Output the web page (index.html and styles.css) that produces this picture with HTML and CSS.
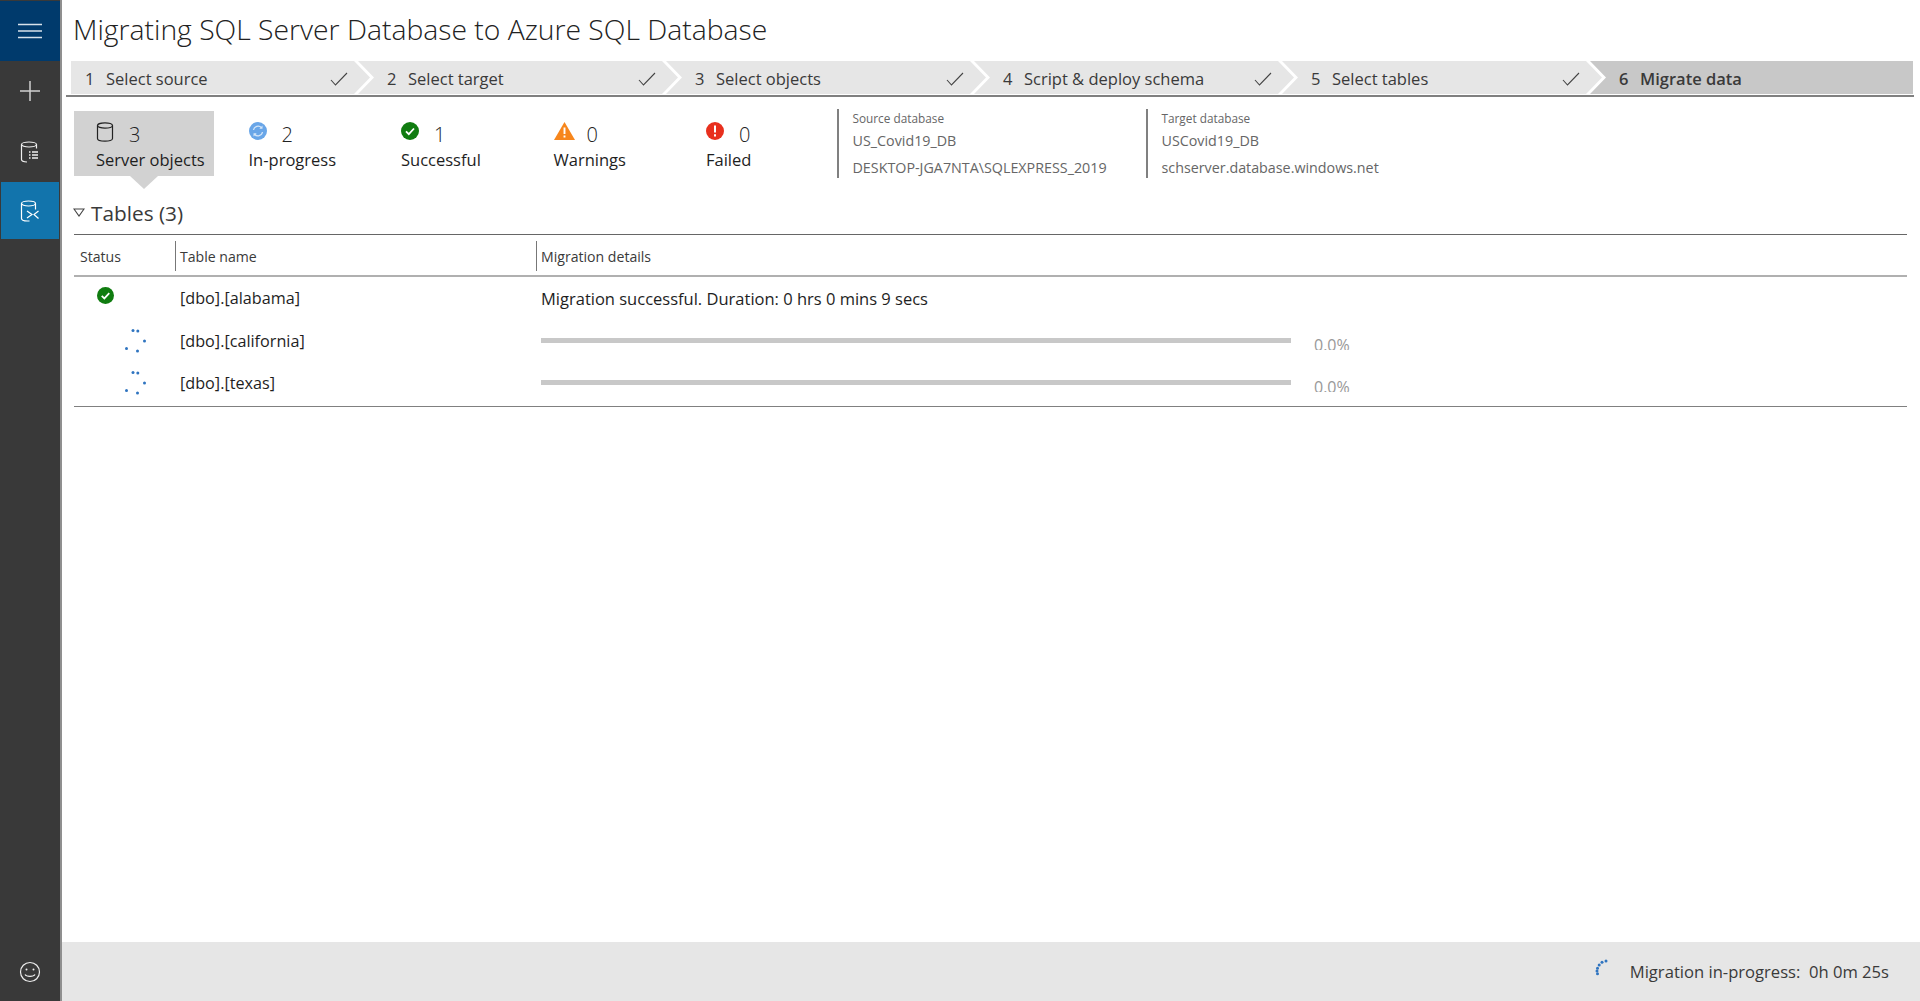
FILE: index.html
```html
<!DOCTYPE html>
<html lang="en">
  <head>
    <meta charset="UTF-8" />
    <title>Migrating SQL Server Database to Azure SQL Database</title>
    <link rel="stylesheet" href="styles.css">
  </head>
  <body>
    <nav class="sidebar">
      <div class="nav-menu">
        <svg width="24" height="16" viewBox="0 0 24 16"><path d="M0 1.5h24M0 8h24M0 14.5h24" stroke="#d8e2ea" stroke-width="1.3" fill="none"/></svg>
      </div>
      <div class="nav-item">
        <svg width="22" height="22" viewBox="0 0 22 22"><path d="M11 1v20M1 11h20" stroke="#cfcfcf" stroke-width="1.5" fill="none"/></svg>
      </div>
      <div class="nav-item nav-db">
        <svg width="20" height="22" viewBox="0 0 20 22" fill="none" stroke="#f0f0f0" stroke-width="1.2"><ellipse cx="9" cy="3.5" rx="7.5" ry="2.5"/><path d="M1.500 3.500v15c0 1.400 2.500 2.400 5.500 2.500M16.500 3.500v4"/><path d="M9 11h1.500M12 11h6M9 14h1.500M12 14h6M9 17h1.500M12 17h6" stroke-width="1.6"/></svg>
      </div>
      <div class="nav-item nav-active">
        <svg width="20" height="22" viewBox="0 0 20 22" fill="none" stroke="#fff" stroke-width="1.2"><ellipse cx="8.500" cy="3.500" rx="7" ry="2.500"/><path d="M1.500 3.500v15c0 1.500 3 2.500 6 2.500h2M15.500 3.500v6"/><path d="M7 11l5 3.500-5 3.500M18.500 11l-4.500 3.500 4.500 4"/></svg>
      </div>
      <div class="nav-bottom">
        <svg width="22" height="22" viewBox="0 0 22 22" fill="none" stroke="#eee" stroke-width="1.2"><circle cx="11" cy="11" r="9.500"/><path d="M6 13.500c1.500 2.500 8.500 2.500 10 0"/><circle cx="7.500" cy="8.500" r="1" fill="#eee" stroke="none"/><circle cx="14.500" cy="8.500" r="1" fill="#eee" stroke="none"/></svg>
      </div>
    </nav>

    <main class="main">
      <h1 class="title">Migrating SQL Server Database to Azure SQL Database</h1>

      <div class="steps">
        <div class="step step-first"><span class="step-num">1</span>Select source<svg class="check" width="18" height="14" viewBox="0 0 18 14"><path d="M1 8l4.500 5L17 1" fill="none" stroke="#444" stroke-width="1.100"/></svg></div>
        <div class="step"><span class="step-num">2</span>Select target<svg class="check" width="18" height="14" viewBox="0 0 18 14"><path d="M1 8l4.500 5L17 1" fill="none" stroke="#444" stroke-width="1.100"/></svg></div>
        <div class="step"><span class="step-num">3</span>Select objects<svg class="check" width="18" height="14" viewBox="0 0 18 14"><path d="M1 8l4.500 5L17 1" fill="none" stroke="#444" stroke-width="1.100"/></svg></div>
        <div class="step"><span class="step-num">4</span>Script &amp; deploy schema<svg class="check" width="18" height="14" viewBox="0 0 18 14"><path d="M1 8l4.500 5L17 1" fill="none" stroke="#444" stroke-width="1.100"/></svg></div>
        <div class="step"><span class="step-num">5</span>Select tables<svg class="check" width="18" height="14" viewBox="0 0 18 14"><path d="M1 8l4.500 5L17 1" fill="none" stroke="#444" stroke-width="1.100"/></svg></div>
        <div class="step step-current"><span class="step-num">6</span>Migrate data</div>
      </div>

      <div class="summary">
        <div class="metric metric-selected">
          <div class="metric-top">
            <span class="metric-icon"><svg width="18" height="20" viewBox="0 0 18 20" fill="none" stroke="#222" stroke-width="1.200"><ellipse cx="9" cy="3.500" rx="7.500" ry="2.700"/><path d="M1.500 3.500v13c0 1.500 3.400 2.700 7.500 2.700s7.500-1.200 7.500-2.700v-13"/></svg></span>
            <span class="metric-num">3</span>
          </div>
          <div class="metric-label">Server objects</div>
        </div>
        <div class="metric">
          <div class="metric-top">
            <span class="metric-icon"><svg width="18" height="18" viewBox="0 0 18 18"><circle cx="9" cy="9" r="9" fill="#69a6e8"/><path d="M4.500 8a4.600 4.600 0 0 1 8-2.200M13.500 10a4.600 4.600 0 0 1-8 2.200" fill="none" stroke="#d3e5f8" stroke-width="1.300"/><path d="M13.500 3.500v3.200h-3.200M4.500 14.500v-3.200h3.200" fill="#d3e5f8"/></svg></span>
            <span class="metric-num">2</span>
          </div>
          <div class="metric-label">In-progress</div>
        </div>
        <div class="metric">
          <div class="metric-top">
            <span class="metric-icon"><svg width="18" height="18" viewBox="0 0 18 18"><circle cx="9" cy="9" r="9" fill="#107c10"/><path d="M5 9.300l2.800 2.800L13 6.500" fill="none" stroke="#fff" stroke-width="1.800"/></svg></span>
            <span class="metric-num">1</span>
          </div>
          <div class="metric-label">Successful</div>
        </div>
        <div class="metric">
          <div class="metric-top">
            <span class="metric-icon"><svg width="21" height="18" viewBox="0 0 21 18"><path d="M10.500 0L21 18H0z" fill="#f7861c"/><path d="M10.500 5.500v6.500M10.500 13.500v2" stroke="#fff" stroke-width="1.900"/></svg></span>
            <span class="metric-num">0</span>
          </div>
          <div class="metric-label">Warnings</div>
        </div>
        <div class="metric">
          <div class="metric-top">
            <span class="metric-icon"><svg width="18" height="18" viewBox="0 0 18 18"><circle cx="9" cy="9" r="9" fill="#e8301e"/><path d="M9 3.500v7M9 12.200v2.200" stroke="#fff" stroke-width="2"/></svg></span>
            <span class="metric-num">0</span>
          </div>
          <div class="metric-label">Failed</div>
        </div>

        <div class="db-info db-source">
          <div class="db-caption">Source database</div>
          <div class="db-line">US_Covid19_DB</div>
          <div class="db-line">DESKTOP-JGA7NTA\SQLEXPRESS_2019</div>
        </div>
        <div class="db-info db-target">
          <div class="db-caption">Target database</div>
          <div class="db-line">USCovid19_DB</div>
          <div class="db-line">schserver.database.windows.net</div>
        </div>
      </div>

      <div class="section-head">
        <svg width="12" height="9" viewBox="0 0 12 9"><path d="M1 1h10L6 8z" fill="none" stroke="#444" stroke-width="1.100"/></svg>
        <span>Tables (3)</span>
      </div>

      <div class="table">
        <div class="table-head">
          <div class="col-status">Status</div>
          <div class="col-name">Table name</div>
          <div class="col-details">Migration details</div>
        </div>
        <div class="table-body">
          <div class="table-row">
            <div class="col-status cell-ok"><svg width="17" height="17" viewBox="0 0 18 18"><circle cx="9" cy="9" r="9" fill="#107c10"/><path d="M5 9.300l2.800 2.800L13 6.500" fill="none" stroke="#fff" stroke-width="1.800"/></svg></div>
            <div class="col-name">[dbo].[alabama]</div>
            <div class="col-details cell-message">Migration successful. Duration: 0 hrs 0 mins 9 secs</div>
          </div>
          <div class="table-row">
            <div class="col-status cell-spin"><svg width="24" height="26" viewBox="0 0 24 26" fill="#2f74c0"><circle cx="9" cy="2.500" r="1.500"/><circle cx="13.800" cy="3" r="1.500"/><circle cx="20.500" cy="13" r="1.500"/><circle cx="13.500" cy="23" r="1.500"/><circle cx="2.500" cy="20.500" r="1.500"/></svg></div>
            <div class="col-name">[dbo].[california]</div>
            <div class="col-details progress"><div class="bar"></div><div class="pct">0.0%</div></div>
          </div>
          <div class="table-row">
            <div class="col-status cell-spin"><svg width="24" height="26" viewBox="0 0 24 26" fill="#2f74c0"><circle cx="9" cy="2.500" r="1.500"/><circle cx="13.800" cy="3" r="1.500"/><circle cx="20.500" cy="13" r="1.500"/><circle cx="13.500" cy="23" r="1.500"/><circle cx="2.500" cy="20.500" r="1.500"/></svg></div>
            <div class="col-name">[dbo].[texas]</div>
            <div class="col-details progress"><div class="bar"></div><div class="pct">0.0%</div></div>
          </div>
        </div>
      </div>

      <footer class="status-bar">
        <svg width="14" height="17" viewBox="0 0 14 17" fill="#2f74c0"><circle cx="12" cy="2" r="1.500"/><circle cx="8" cy="3.300" r="1.500"/><circle cx="5.200" cy="6" r="1.500"/><circle cx="3.500" cy="9.300" r="1.500"/><circle cx="3" cy="12" r="1.500"/><circle cx="3.500" cy="14.700" r="1.500"/></svg>
        <span>Migration in-progress:&nbsp; 0h 0m 25s</span>
      </footer>
    </main>
  </body>
</html>
```

FILE: styles.css
```css
/* Global */
html,
body {
  height: 100%;
}

body {
  font-family: "Open Sans", "Noto Sans", sans-serif;
  background-color: #ffffff;
  margin: 0;
  color: #333;
  display: flex;
  height: 100vh;
  overflow: hidden;
}

/* Sidebar */
.sidebar {
  width: 60px;
  flex-shrink: 0;
  background-color: #393939;
  border-right: 2px solid #8f8f8f;
  display: flex;
  flex-direction: column;
  align-items: center;
}

.nav-menu {
  align-self: stretch;
  height: 60px;
  margin-top: 1px;
  background-color: #003a6c;
  display: flex;
  align-items: center;
  justify-content: center;
}

.nav-item {
  width: 58px;
  height: 60px;
  display: flex;
  align-items: center;
  justify-content: center;
}

.nav-db {
  height: 61px;
}

.nav-active {
  height: 57px;
  background-color: #1274ac;
}

.nav-bottom {
  margin-top: auto;
  height: 58px;
  padding-top: 2px;
  display: flex;
  align-items: center;
  justify-content: center;
}

/* Main column */
.main {
  flex: 1;
  min-width: 0;
  display: flex;
  flex-direction: column;
}

.title {
  margin: 0;
  height: 61px;
  padding-left: 11px;
  font-size: 28.300px;
  font-weight: 300;
  line-height: 58px;
  color: #222;
  white-space: nowrap;
}

/* Steps */
.steps {
  display: flex;
  margin: 0 6px 0 4px;
  padding: 0 1px 1px 5px;
  border-bottom: 2px solid #808080;
}

.step {
  flex-shrink: 0;
  width: 320px;
  height: 33px;
  margin-right: -12px;
  padding: 2px 22px 0 29px;
  box-sizing: border-box;
  background-color: #e6e6e6;
  display: flex;
  align-items: center;
  font-size: 16.500px;
  color: #3a3a3a;
  white-space: nowrap;
  clip-path: polygon(0 0, calc(100% - 16px) 0, 100% 50%, calc(100% - 16px) 100%, 0 100%, 16px 50%);
}

.step-first {
  width: 299px;
  padding-left: 14px;
  clip-path: polygon(0 0, calc(100% - 16px) 0, 100% 50%, calc(100% - 16px) 100%, 0 100%);
}

.step-current {
  flex: 1;
  margin-right: 0;
  background-color: #c8c8c8;
  font-weight: 600;
  clip-path: polygon(0 0, 100% 0, 100% 100%, 0 100%, 16px 50%);
}

.step-num {
  width: 21px;
}

.check {
  margin-left: auto;
}

/* Summary */
.summary {
  display: flex;
  margin: 14px 0 0 12px;
  height: 82px;
}

.metric {
  position: relative;
  width: 140px;
  height: 65px;
  margin-right: 12.500px;
  padding: 9px 0 0 22px;
  box-sizing: border-box;
}

.metric-selected {
  background-color: #d2d2d2;
}

.metric-selected::after {
  content: "";
  position: absolute;
  left: 56px;
  top: 100%;
  border-left: 14px solid transparent;
  border-right: 14px solid transparent;
  border-top: 13px solid #d2d2d2;
}

.metric-top {
  display: flex;
  align-items: flex-start;
  height: 29px;
}

.metric-icon {
  width: 33px;
  height: 24px;
  margin-top: 2px;
}

.metric-num {
  font-size: 20px;
  font-weight: 300;
  line-height: 29px;
  color: #222;
}

.metric-label {
  font-size: 16.500px;
  line-height: 22px;
  color: #1e1e1e;
  white-space: nowrap;
}

.db-info {
  height: 69px;
  margin-top: -2px;
  padding-left: 14px;
  border-left: 2px solid #808080;
  color: #666;
  font-size: 14.300px;
  line-height: 26.500px;
  white-space: nowrap;
}

.db-source {
  width: 293px;
}

.db-caption {
  font-size: 11.800px;
  line-height: 19px;
}

/* Tables section */
.section-head {
  height: 41px;
  margin-left: 11px;
  padding-bottom: 2px;
  box-sizing: border-box;
  display: flex;
  align-items: center;
  gap: 6px;
  font-size: 20.800px;
  color: #3a3a3a;
}

.table {
  margin: 0 13px 0 12px;
  border-top: 1.500px solid #666;
  border-bottom: 1.500px solid #808080;
}

.table-head {
  display: flex;
  height: 42px;
  padding-top: 6px;
  box-sizing: border-box;
  border-bottom: 2px solid #b0b0b0;
  font-size: 14.100px;
  color: #3a3a3a;
}

.table-head .col-name,
.table-head .col-details {
  height: 30px;
  padding-left: 4px;
  border-left: 1.500px solid #777;
  box-sizing: border-box;
}

.table-head > div {
  line-height: 31px;
}

.col-status {
  width: 101px;
  padding-left: 6px;
  box-sizing: border-box;
}

.col-name {
  width: 361px;
  padding-left: 5px;
  box-sizing: border-box;
}

.col-details {
  flex: 1;
  padding-left: 5px;
}

.table-body {
  padding: 0 0 1px;
}

.table-row {
  display: flex;
  align-items: center;
  height: 42.500px;
  font-size: 16.200px;
  color: #1e1e1e;
}

.cell-message {
  font-size: 16.500px;
}

.cell-ok {
  padding-left: 23px;
  display: flex;
  margin-top: -5px;
}

.cell-spin {
  padding-left: 50px;
  display: flex;
}

.progress {
  display: flex;
  align-items: flex-start;
  height: 42.500px;
  padding-top: 18px;
  box-sizing: border-box;
}

.bar {
  width: 750px;
  height: 5px;
  background-color: #c8c8c8;
}

.pct {
  margin-left: 23px;
  height: 12px;
  overflow: hidden;
  font-size: 16px;
  line-height: 15px;
  color: #999;
}

/* Footer */
.status-bar {
  margin-top: auto;
  height: 59px;
  padding-right: 31px;
  background-color: #e6e6e6;
  display: flex;
  align-items: center;
  justify-content: flex-end;
  gap: 22px;
  font-size: 16.600px;
  color: #3a3a3a;
}

.status-bar svg {
  margin-top: -8px;
}
```
